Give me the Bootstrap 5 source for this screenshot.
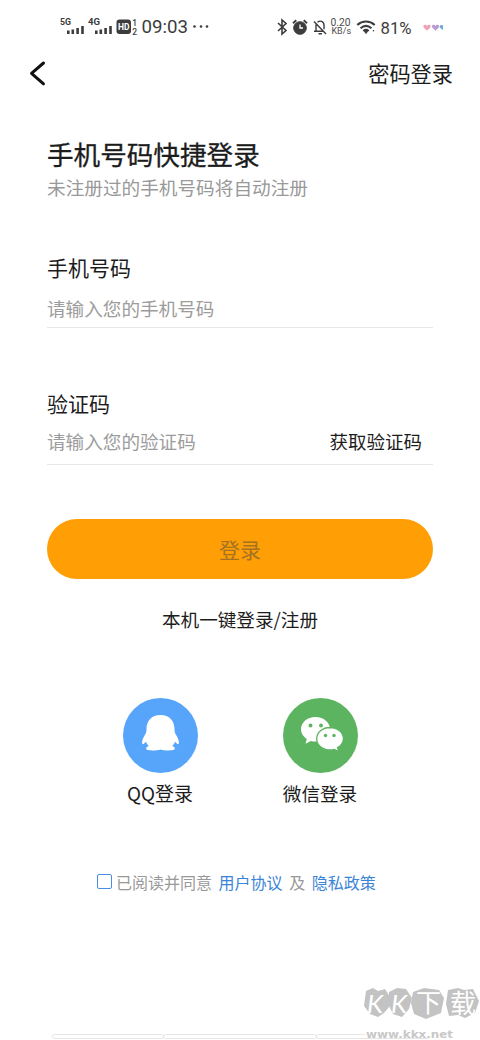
<!DOCTYPE html>
<html lang="zh-CN">
<head>
<meta charset="utf-8">
<meta name="viewport" content="width=device-width, initial-scale=1">
<title>手机号码快捷登录</title>
<link href="https://cdn.jsdelivr.net/npm/bootstrap@5.3.0/dist/css/bootstrap.min.css" rel="stylesheet">
<style>
body{color:#1c1c1c;background:#fff}
.screen{width:480px;height:1040px;overflow:hidden;font-family:"Noto Sans CJK SC",sans-serif}
.statusbar{height:54px;padding:0 36px 0 60px}
.statusbar svg{display:block;flex:none}
.topbar{height:40px;padding:0 27px 0 29px}
.topbar a{font-size:21.2px;line-height:38px;margin-top:-2px}
.form-area{padding:0 47px}
.title{font-size:26.6px;line-height:36px;margin-top:42px;font-weight:400;-webkit-text-stroke:.3px #1c1c1c}
.sub{font-size:18.65px;line-height:28px;color:#999;margin-top:1px}
.lab{font-size:21px;line-height:30px;display:block}
.lab-phone{margin-top:51px}
.lab-code{margin-top:60px}
.line{border-bottom:1px solid #e6e6e6}
.line-phone{padding:12px 0 5px}
.line-code{padding:9px 0 9px}
.line input{font-size:18.6px;line-height:28px;height:28px;color:#333;min-width:0}
.line input::placeholder{color:#9c9c9c;opacity:1}
.code{font-size:18.5px;line-height:28px;margin-right:11px}
.login,.login:hover{background:#ff9f05;color:#a57223}
.login{height:60px;font-size:21px;border:0;margin-top:53.5px;padding-top:8px}
.onekey{font-size:18.6px;line-height:28px;margin-top:26.5px}
.social{margin-top:65px;padding:0 80px}
.social svg{display:block}
.social span{font-size:18.6px;line-height:28px;margin-top:6px}
.social span.qq{font-size:18.9px}
.agree{font-size:16px;line-height:24px;color:#999;margin-top:63px;padding-left:97px}
.agree a{color:#3c85d6}
.agree a,.agree .and{margin-left:6.6px}
.agree input{width:15px;height:15px;border:1.6px solid #4a8de0;border-radius:2px!important;margin:-1px 4px 0 0;background:#fff}
</style>
</head>
<body>
<main class="screen d-flex flex-column">
  <div class="statusbar d-flex align-items-center justify-content-between">
    <svg width="150" height="30" viewBox="0 0 150 30" fill="#3c3c3c" font-family="Roboto,sans-serif">
      <text x="0" y="13" font-size="9" font-weight="700" textLength="11" lengthAdjust="spacingAndGlyphs">5G</text>
      <path d="M7 18.500h2.600V22H7zM11.500 17.500h2.600V22h-2.600zM16.300 16h2.600v6h-2.600zM21.200 14h2.600v8h-2.600z"/>
      <text x="28" y="13" font-size="9" font-weight="700" textLength="12" lengthAdjust="spacingAndGlyphs">4G</text>
      <path d="M35 18.500h2.600V22H35zM39.500 17.500h2.600V22h-2.600zM44.300 16h2.600v6h-2.600zM49.200 14h2.600v8h-2.600z"/>
      <rect x="56.500" y="7.500" width="14.500" height="14.500" rx="3"/>
      <text x="58" y="18.300" font-size="9" font-weight="700" fill="#fff" textLength="11.500" lengthAdjust="spacingAndGlyphs">HD</text>
      <text x="72.300" y="14" font-size="8.500" font-weight="500">1</text>
      <text x="72.300" y="22.500" font-size="8.500" font-weight="500">2</text>
      <text x="81.500" y="21" font-size="18.500" textLength="46.500" lengthAdjust="spacingAndGlyphs">09:03</text>
      <circle cx="134.500" cy="14.500" r="1.300"/><circle cx="141" cy="14.500" r="1.300"/><circle cx="147" cy="14.500" r="1.300"/>
    </svg>
    <svg width="168" height="30" viewBox="0 0 168 30" fill="none" stroke="#3c3c3c" font-family="Roboto,sans-serif">
      <path stroke-width="1.600" d="M2 11l8 7.500-4 3.500V8l4 3.500L2 19"/>
      <circle cx="24" cy="16" r="6.300" fill="#3c3c3c"/><path stroke="#fff" stroke-width="1.300" d="M24 12.500V16h3"/><path stroke-width="1.900" d="M17 11.300l3.300-3M31 11.300l-3.300-3"/>
      <path stroke-width="1.400" d="M38 9.500l12 12.500M38 19.300h9.500M40 19v-6.500M41.500 10.300c2.500-2.300 6.500-1 6.500 3v4M42.500 21.800h3.500"/>
      <g fill="#4b4b4b" stroke="none"><text x="54.500" y="14" font-size="10" textLength="20" lengthAdjust="spacingAndGlyphs">0.20</text><text x="55.500" y="22" font-size="8.500" textLength="19.500" lengthAdjust="spacingAndGlyphs">KB/s</text>
      <text x="104.500" y="21.500" font-size="16" fill="#3c3c3c" textLength="31" lengthAdjust="spacingAndGlyphs">81%</text></g>
      <path stroke-width="2.100" d="M81.300 13c5-4.600 12.400-4.600 17.400 0M84.500 16.300c3.500-3 7.500-3 11 0M87.300 19c1.800-1.400 3.600-1.400 5.400 0"/><path d="M88.500 19.500h3L90 21.500z" fill="#3c3c3c"/><circle cx="97.500" cy="18.700" r=".8" fill="#3c3c3c" stroke="none"/>
      <g stroke="none"><path fill="#eda2b5" d="M151 18.800l-3.300-3.300c-1.500-2.500 2-3.700 3.300-1.500 1.300-2.200 4.800-1 3.300 1.500z"/><path fill="#bb9bd4" d="M159.500 18.800l-3.300-3.300c-1.500-2.500 2-3.700 3.300-1.500 1.300-2.200 4.800-1 3.300 1.500z"/><path fill="#6caadc" d="M167 18.300l-3-2.800c-1.200-1.500 1-3.200 3-2z"/></g>
    </svg>
  </div>

  <nav class="topbar d-flex align-items-center justify-content-between">
    <svg width="20" height="28" viewBox="0 0 20 28" fill="none" stroke="#111" stroke-width="3" stroke-linecap="round" stroke-linejoin="round"><path d="M14.500 3L2.500 13.300l12 10.500"/></svg>
    <a href="#" class="text-reset text-decoration-none">密码登录</a>
  </nav>

  <form class="form-area">
    <h1 class="title mb-0">手机号码快捷登录</h1>
    <p class="sub mb-0">未注册过的手机号码将自动注册</p>
    <label class="lab lab-phone" for="phone">手机号码</label>
    <div class="line line-phone d-flex"><input id="phone" class="form-control-plaintext p-0 border-0 flex-grow-1" placeholder="请输入您的手机号码"></div>
    <label class="lab lab-code" for="code">验证码</label>
    <div class="line line-code d-flex"><input id="code" class="form-control-plaintext p-0 border-0 flex-grow-1" placeholder="请输入您的验证码"><span class="code text-nowrap">获取验证码</span></div>
    <button type="button" class="login btn rounded-pill w-100 d-block">登录</button>
    <div class="onekey text-center">本机一键登录/注册</div>
  </form>

  <div class="social d-flex">
    <div class="w-50 d-flex flex-column align-items-center">
      <svg width="75" height="75" viewBox="0 0 75 75"><circle cx="37.500" cy="37.500" r="37.500" fill="#56a5fb"/><path fill="#fff" d="M37.500 17C28.500 17 23.500 23 23.500 31c0 2.500-.4 4-1.300 5.500-1.600 2.500-3.500 5.500-3 9 .3 1.300 1.200.8 2.200-.2l1.600-1.500c.5 1.600 1.500 3 2.800 4.200-3.500 1.300-3.600 4 .4 4.300 4 .3 9 0 11.300-.9 2.300.9 7.300 1.200 11.300.9 4-.3 3.900-3 .4-4.300 1.300-1.200 2.300-2.600 2.800-4.200l1.600 1.500c1 1 1.900 1.500 2.200.2.500-3.500-1.400-6.500-3-9-.9-1.500-1.300-3-1.300-5.500 0-8-5-14-14-14z"/></svg>
      <span class="qq">QQ登录</span>
    </div>
    <div class="w-50 d-flex flex-column align-items-center">
      <svg width="75" height="75" viewBox="0 0 75 75"><circle cx="37.500" cy="37.500" r="37.500" fill="#5cb461"/><path fill="#fff" d="M32.500 19c-8.300 0-14.500 5.500-14.500 12.300 0 4.200 2.200 7.500 5.800 9.700l-1.300 4.800 5.300-2.900c1.500.4 3.100.6 4.700.6 8.300 0 14.500-5.500 14.500-12.200S40.800 19 32.500 19z"/><path fill="#fff" stroke="#5cb461" stroke-width="1.300" d="M47 29.500c-7.500 0-13.300 4.800-13.300 11.200S39.500 52 47 52c1.500 0 2.900-.2 4.200-.6l4.600 2.300-1.200-4.100c3.500-2 5.800-5.200 5.800-8.900 0-6.400-5.900-11.200-13.400-11.200z"/><g fill="#5cb461"><circle cx="27.500" cy="27.500" r="1.900"/><circle cx="38" cy="27.500" r="1.900"/><circle cx="42.500" cy="37.500" r="1.700"/><circle cx="51" cy="37.500" r="1.700"/></g></svg>
      <span>微信登录</span>
    </div>
  </div>

  <div class="agree d-flex align-items-center">
    <input type="checkbox" class="form-check-input flex-shrink-0" aria-label="同意">
    <span>已阅读并同意</span>
    <a href="#" class="text-decoration-none">用户协议</a>
    <span class="and">及</span>
    <a href="#" class="text-decoration-none">隐私政策</a>
  </div>

  <svg class="mt-auto d-block flex-shrink-0" width="480" height="58" viewBox="0 0 480 58">
    <g fill="none" stroke="#e6e6e6"><rect x="52.500" y="52.500" width="111" height="4" rx="2"/><rect x="163.500" y="52.500" width="153" height="4" rx="2"/><path d="M365 52.500h-46.500q-2 0-2 2t2 2H428"/></g>
    <g fill="#c3c3c3"><path d="M366 9l7-3 5 3 7-2 5 8-1 10-5 6-6 4-8-3-6-8z"/><path d="M389 10l8-4 9 1 6 9-3 11-7 8-9-3-5-10z"/><path d="M413 10l11-4 15 2 5 8-3 15-15 6-12-5-3-11z"/><path d="M448 8l10-2 6 2 9-1 6 12-4 12-10 5-7-3-9 1-3-12z"/></g>
    <g fill="#fff"><g font-family="Lato,sans-serif" font-style="italic" font-size="26"><text x="367" y="31">K</text><text x="391" y="31">K</text></g><text x="416" y="30" font-size="25">下</text><text x="450" y="31" font-size="26">载</text></g>
    <text x="366" y="55.500" font-family="DejaVu Sans,sans-serif" font-weight="700" font-size="11" fill="#c8c8c8" textLength="87" lengthAdjust="spacingAndGlyphs">www.kkx.net</text>
  </svg>
</main>
<script src="https://cdn.jsdelivr.net/npm/bootstrap@5.3.0/dist/js/bootstrap.bundle.min.js"></script>
</body>
</html>
